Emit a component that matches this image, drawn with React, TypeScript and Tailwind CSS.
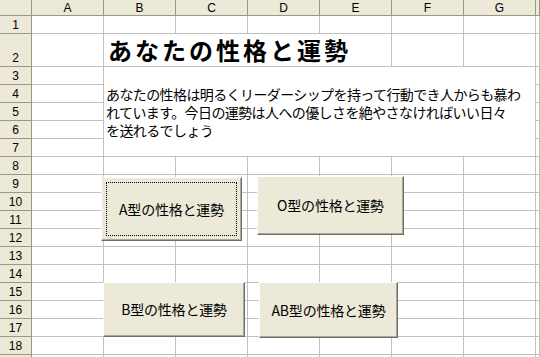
import React from "react";

const COLS = ["A", "B", "C", "D", "E", "F", "G", ""];

const head =
  "flex items-center justify-center bg-[#ece9d8] border-r border-b border-[#9a9783] text-[12px] leading-none text-black";
const rowHead =
  "flex items-end justify-center pb-[2px] bg-[#ece9d8] border-r border-b border-[#9a9783] text-[12px] leading-none text-black";
const cell = "border-r border-b border-[#c0c0c0]";

const jp = "font-['Noto_Sans_CJK_JP','Noto_Sans',sans-serif]";

function Cells({ n }: { n: number }) {
  return (
    <>
      {Array.from({ length: n }).map((_, i) => (
        <div key={i} className={cell} />
      ))}
    </>
  );
}

function SheetButton({
  label,
  className,
  focused,
}: {
  label: string;
  className: string;
  focused?: boolean;
}) {
  return (
    <button
      className={`absolute flex items-center justify-center bg-[#ece9d8] border border-t-white border-l-white border-r-[#716f64] border-b-[#716f64] shadow-[inset_-1px_-1px_0_#aca899] text-[14px] tracking-[-0.2px] text-black ${jp} ${className}`}
    >
      {focused && (
        <span className="absolute inset-[4px] border border-dotted border-black" />
      )}
      <span className="relative">{label}</span>
    </button>
  );
}

export default function App() {
  const lower = Array.from({ length: 11 }, (_, i) => i + 8);
  return (
    <div className="relative w-[540px] h-[357px] overflow-hidden bg-white font-['Liberation_Sans',sans-serif]">
      <div className="grid grid-cols-[32px_repeat(7,72px)_1fr] grid-rows-[16px_18px_33px_repeat(17,18px)]">
        {/* column headers */}
        <div className={head} />
        {COLS.map((c, i) => (
          <div key={i} className={head}>
            {c}
          </div>
        ))}

        {/* row 1 */}
        <div className={rowHead}>1</div>
        <Cells n={8} />

        {/* row 2 - title */}
        <div className={rowHead}>2</div>
        <div className={cell} />
        <div className={`${cell} col-span-4 flex items-end pl-[4px] pb-[1px]`}>
          <span className={`${jp} text-[24px] font-bold leading-[30px] tracking-[3px] text-black whitespace-nowrap`}>
            あなたの性格と運勢
          </span>
        </div>
        <Cells n={3} />

        {/* rows 3-7 - merged text block */}
        <div className={rowHead}>3</div>
        <div className={cell} />
        <div className={`${cell} col-span-6 row-span-5 flex items-center pl-[2px]`}>
          <div className={`${jp} text-[14px] leading-[18px] tracking-[-0.6px] text-black whitespace-nowrap`}>
            <div>あなたの性格は明るくリーダーシップを持って行動でき人からも慕わ</div>
            <div>れています。今日の運勢は人への優しさを絶やさなければいい日々</div>
            <div>を送れるでしょう</div>
          </div>
        </div>
        <div className={cell} />
        {[4, 5, 6, 7].map((r) => (
          <React.Fragment key={r}>
            <div className={rowHead}>{r}</div>
            <div className={cell} />
            <div className={cell} />
          </React.Fragment>
        ))}

        {/* rows 8-18 */}
        {lower.map((r) => (
          <React.Fragment key={r}>
            <div className={rowHead}>{r}</div>
            <Cells n={8} />
          </React.Fragment>
        ))}
        {/* row 19, only a sliver shows */}
        <div className={rowHead} />
        <Cells n={8} />
      </div>

      <SheetButton label="A型の性格と運勢" focused className="left-[101px] top-[177px] w-[141px] h-[64px]" />
      <SheetButton label="O型の性格と運勢" className="left-[257px] top-[176px] w-[147px] h-[59px]" />
      <SheetButton label="B型の性格と運勢" className="left-[103px] top-[282px] w-[142px] h-[55px]" />
      <SheetButton label="AB型の性格と運勢" className="left-[259px] top-[282px] w-[139px] h-[56px]" />
    </div>
  );
}
